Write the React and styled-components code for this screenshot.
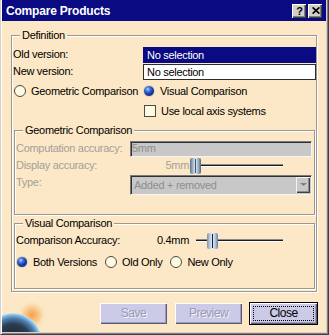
import styled, { createGlobalStyle } from "styled-components";

const GlobalStyle = createGlobalStyle`
  html, body {
    margin: 0;
    padding: 0;
    background: #d4d0c8;
  }
  body {
    font-family: "Liberation Sans", Arial, sans-serif;
    font-size: 11px;
    letter-spacing: -0.3px;
    color: #000;
  }
`;

function Globe() {
  return (
    <GlobeArt width="50" height="30" viewBox="0 0 50 30">
      <defs>
        <radialGradient id="glow" cx="0.5" cy="0.5" r="0.5">
          <stop offset="0" stopColor="#f59a3c" stopOpacity="0.95" />
          <stop offset="0.5" stopColor="#f8b468" stopOpacity="0.6" />
          <stop offset="1" stopColor="#fce8c6" stopOpacity="0" />
        </radialGradient>
        <radialGradient id="earth" cx="11" cy="40" r="29" gradientUnits="userSpaceOnUse">
          <stop offset="0" stopColor="#1a1f28" />
          <stop offset="0.62" stopColor="#2c3c52" />
          <stop offset="0.82" stopColor="#4d7fae" />
          <stop offset="0.94" stopColor="#86c0e4" />
          <stop offset="1" stopColor="#c8ecf6" />
        </radialGradient>
      </defs>
      <circle cx="30" cy="13" r="15" fill="url(#glow)" />
      <circle cx="11" cy="40" r="29" fill="url(#earth)" />
    </GlobeArt>
  );
}

function Slider({ pos, disabled }) {
  return (
    <SliderBox>
      <Track />
      <Thumb $disabled={disabled} style={{ left: pos }} />
    </SliderBox>
  );
}

export default function App() {
  return (
    <>
      <GlobalStyle />
      <Window>
        <TitleBar>
          <Title>Compare Products</Title>
          <CaptionButtons>
            <CaptionButton>?</CaptionButton>
            <CaptionButton>
              <svg width="8" height="7" viewBox="0 0 8 7">
                <path d="M0.6 0.4 L7.4 6.6 M7.4 0.4 L0.6 6.6" stroke="#000" strokeWidth="1.7" />
              </svg>
            </CaptionButton>
          </CaptionButtons>
        </TitleBar>

        <Body>
          <Definition>
            <Legend>Definition</Legend>
            <VersionRow>
              <Label>Old version:</Label>
              <TextField $selected>No selection</TextField>
            </VersionRow>
            <VersionRow $mt={1}>
              <Label>New version:</Label>
              <TextField>No selection</TextField>
            </VersionRow>
            <OptionRow $mt={5}>
              <Choice $indent={1}>
                <Radio />
                Geometric Comparison
              </Choice>
              <Choice>
                <Radio $checked />
                Visual Comparison
              </Choice>
            </OptionRow>
            <OptionRow $mt={8}>
              <span />
              <Choice $indent={1}>
                <Checkbox />
                Use local axis systems
              </Choice>
            </OptionRow>

            <SubGroup $mt={13} $pt={10} $pb={19}>
              <Legend>Geometric Comparison</Legend>
              <ParamRow $h={16}>
                <Label $disabled>Computation accuracy:</Label>
                <InsetField>5mm</InsetField>
              </ParamRow>
              <ParamRow $h={16} $mt={1}>
                <Label $disabled>Display accuracy:</Label>
                <SliderValue $disabled>5mm</SliderValue>
                <Slider pos={0} disabled />
              </ParamRow>
              <ParamRow $h={20} $mt={1}>
                <Label $disabled>Type:</Label>
                <Combo>
                  <ComboText>Added + removed</ComboText>
                  <ComboArrow>
                    <svg width="7" height="5" viewBox="0 0 7 5">
                      <path d="M1 1 L6 1 L3.5 4 Z" fill="#fff" />
                      <path d="M0 0 L7 0 L3.5 3.6 Z" fill="#808080" />
                    </svg>
                  </ComboArrow>
                </Combo>
              </ParamRow>
            </SubGroup>

            <SubGroup $mt={8} $pt={9} $pb={20}>
              <Legend>Visual Comparison</Legend>
              <ParamRow $h={16}>
                <Label>Comparison Accuracy:</Label>
                <SliderValue>0.4mm</SliderValue>
                <Slider pos={17} />
              </ParamRow>
              <ChoiceLine>
                <Choice>
                  <Radio $checked />
                  Both Versions
                </Choice>
                <Choice>
                  <Radio />
                  Old Only
                </Choice>
                <Choice>
                  <Radio />
                  New Only
                </Choice>
              </ChoiceLine>
            </SubGroup>
          </Definition>

          <Footer>
            <Globe />
            <ButtonBar>
              <DialogButton disabled>
                <Caption>Save</Caption>
              </DialogButton>
              <DialogButton disabled>
                <Caption>Preview</Caption>
              </DialogButton>
              <DialogButton $default>
                <Caption $focus>Close</Caption>
              </DialogButton>
            </ButtonBar>
          </Footer>
        </Body>
      </Window>
    </>
  );
}

const Window = styled.div`
  width: 329px;
  height: 335px;
  box-sizing: border-box;
  display: flex;
  flex-direction: column;
  border-left: 1px solid #d4d0c8;
  border-right: 1px solid #404040;
  border-bottom: 1px solid #404040;
  padding: 0 2px 2px 1px;
  background: #d4d0c8;
  box-shadow: inset 1px 0 0 #fff, inset -1px -1px 0 #808080;
  overflow: hidden;
`;

const TitleBar = styled.div`
  height: 21px;
  flex: none;
  display: flex;
  align-items: center;
  justify-content: space-between;
  padding: 0 4px;
  background: #0a0a82;
`;

const Title = styled.div`
  color: #fff;
  font-weight: bold;
  font-size: 12px;
  letter-spacing: -0.2px;
`;

const CaptionButtons = styled.div`
  display: flex;
  gap: 2px;
`;

const CaptionButton = styled.div`
  width: 14px;
  height: 14px;
  box-sizing: border-box;
  display: flex;
  align-items: center;
  justify-content: center;
  background: #d4d0c8;
  box-shadow: inset 1px 1px 0 #fff, inset -1px -1px 0 #404040, inset -2px -2px 0 #808080;
  font-weight: bold;
  font-size: 11px;
  letter-spacing: 0;
  color: #000;
  padding-left: 1px;
`;

const Body = styled.div`
  flex: 1;
  display: flex;
  flex-direction: column;
  background: #fce8c6;
`;

const etched = `
  position: relative;
  box-sizing: border-box;
  border: 1px solid #9c9890;
  box-shadow: 1px 1px 0 #fff, inset 1px 1px 0 #fff;
`;

const Definition = styled.div`
  ${etched}
  width: 306px;
  margin: 14px 0 0 9px;
  padding: 11px 0 2px 1px;
`;

const SubGroup = styled.div`
  ${etched}
  width: 301px;
  margin: ${(p) => p.$mt}px 0 0 1px;
  padding: ${(p) => p.$pt}px 0 ${(p) => p.$pb}px 1px;
`;

const Legend = styled.div`
  position: absolute;
  top: -7px;
  left: 8px;
  padding: 0 2px;
  line-height: 12px;
  background: #fce8c6;
  white-space: nowrap;
`;

const Label = styled.div`
  line-height: 14px;
  white-space: nowrap;
  color: ${(p) => (p.$disabled ? "#a3a09a" : "#000")};
`;

const VersionRow = styled.div`
  display: grid;
  grid-template-columns: 130px 173px;
  align-items: start;
  height: 16px;
  margin-top: ${(p) => p.$mt || 0}px;
`;

const TextField = styled.div`
  height: 16px;
  box-sizing: border-box;
  padding-left: 3px;
  line-height: 14px;
  border: 1px solid ${(p) => (p.$selected ? "#0a0a82" : "#2c2c2c")};
  background: ${(p) => (p.$selected ? "#0a0a82" : "#fff")};
  color: ${(p) => (p.$selected ? "#fff" : "#000")};
`;

const OptionRow = styled.div`
  display: grid;
  grid-template-columns: 130px 173px;
  align-items: center;
  height: 12px;
  margin-top: ${(p) => p.$mt}px;
`;

const Choice = styled.label`
  display: inline-flex;
  align-items: center;
  gap: 5px;
  line-height: 12px;
  white-space: nowrap;
  padding-left: ${(p) => p.$indent || 0}px;
`;

const Radio = styled.span`
  width: 12px;
  height: 12px;
  box-sizing: border-box;
  border-radius: 50%;
  flex: none;
  border: 1px solid ${(p) => (p.$checked ? "#e6d2b8" : "#4a4a4a")};
  background: ${(p) =>
    p.$checked
      ? "radial-gradient(circle at 38% 32%, #b6d6ff 0%, #4a7ee0 22%, #1a3ca8 52%, #0a1a60 100%)"
      : "#fffbe2"};
`;

const Checkbox = styled.span`
  width: 12px;
  height: 12px;
  box-sizing: border-box;
  flex: none;
  border: 1px solid #4a4a4a;
  background: #fffbe2;
`;

const ParamRow = styled.div`
  display: grid;
  grid-template-columns: 114px 60px 95px;
  align-items: start;
  height: ${(p) => p.$h}px;
  margin-top: ${(p) => p.$mt || 0}px;

  & > :nth-child(2):last-child {
    grid-column: 2 / 4;
    width: 182px;
  }
`;

const InsetField = styled.div`
  height: 16px;
  box-sizing: border-box;
  padding-left: 1px;
  line-height: 13px;
  color: #8e8e8e;
  background: #c8c8c8;
  border-style: solid;
  border-width: 1px;
  border-color: #7a7a7a #f4f4f4 #f4f4f4 #7a7a7a;
  box-shadow: inset 1px 1px 0 #303030;
`;

const SliderValue = styled.div`
  line-height: 14px;
  text-align: right;
  padding-right: 1px;
  color: ${(p) => (p.$disabled ? "#a3a09a" : "#000")};
`;

const SliderBox = styled.div`
  position: relative;
  width: 95px;
  height: 16px;
`;

const Track = styled.div`
  position: absolute;
  left: 6px;
  right: 2px;
  top: 6px;
  height: 3px;
  box-sizing: border-box;
  background: #1c1c1c;
  border-top: 1px solid #8a8a8a;
  border-bottom: 1px solid #fff;
`;

const Thumb = styled.div`
  position: absolute;
  top: 0;
  width: 11px;
  height: 16px;
  border-radius: 2px;
  background: ${(p) =>
    p.$disabled
      ? "linear-gradient(to right, #5c7288, #aebfd0 30%, #e4eef6 50%, #9fb2c4 75%, #4e6478)"
      : "linear-gradient(to right, #7f92aa, #c4d2e2 30%, #e6eef8 50%, #b6c6d8 75%, #6a7e98)"};

  &::after {
    content: "";
    position: absolute;
    left: 5px;
    top: 1px;
    bottom: 1px;
    width: 1px;
    background: ${(p) => (p.$disabled ? "#44566c" : "#0c1c5c")};
  }
`;

const Combo = styled.div`
  height: 20px;
  box-sizing: border-box;
  display: flex;
  border-style: solid;
  border-width: 1px;
  border-color: #7a7a7a #f4f4f4 #f4f4f4 #7a7a7a;
  box-shadow: inset 1px 1px 0 #303030;
  background: #c8c8c8;
  padding: 1px 1px 1px 1px;
`;

const ComboText = styled.div`
  flex: 1;
  padding-left: 2px;
  line-height: 16px;
  color: #8e8e8e;
`;

const ComboArrow = styled.div`
  width: 14px;
  height: 16px;
  box-sizing: border-box;
  display: flex;
  align-items: center;
  justify-content: center;
  background: #c8c8c8;
  box-shadow: inset 1px 1px 0 #f4f4f4, inset -1px -1px 0 #404040, inset -2px -2px 0 #8a8a8a;
`;

const ChoiceLine = styled.div`
  display: flex;
  gap: 8px;
  height: 13px;
  align-items: center;
  margin-top: 6px;
`;

const Footer = styled.div`
  flex: 1;
  display: flex;
  justify-content: space-between;
  align-items: flex-start;
`;

const GlobeArt = styled.svg`
  align-self: flex-end;
  display: block;
`;

const ButtonBar = styled.div`
  display: flex;
  gap: 6px;
  margin: 10px 8px 0 0;
`;

const DialogButton = styled.button`
  width: 69px;
  height: 23px;
  box-sizing: border-box;
  padding: 0;
  border: 1px solid ${(p) => (p.$default ? "#000" : "transparent")};
  background: #cbcbe8;
  background-clip: padding-box;
  box-shadow: inset 1px 1px 0 #fff, inset -1px -1px 0 #5a5a78, inset -2px -2px 0 #9c9cbc;
  font-family: "Liberation Sans", Arial, sans-serif;
  font-size: 12px;
  letter-spacing: -0.5px;
  color: #000;

  &:disabled {
    color: #9a9ab4;
    text-shadow: 1px 1px 0 #f2f2fa;
  }
`;

const Caption = styled.span`
  display: block;
  margin: 3px;
  height: 15px;
  box-sizing: border-box;
  line-height: 13px;
  border: 1px dotted ${(p) => (p.$focus ? "#000" : "transparent")};
`;
